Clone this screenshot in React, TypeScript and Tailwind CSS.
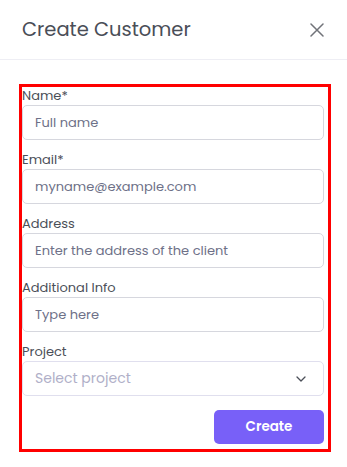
import React from 'react'

const font = { fontFamily: 'Poppins, Inter, "Noto Sans", sans-serif' }

function Field({ label, placeholder }: { label: string; placeholder: string }) {
  return (
    <div className="flex flex-col">
      <label className="text-[13px] leading-[18px] font-normal text-[#4b4f58]">{label}</label>
      <input
        placeholder={placeholder}
        className="h-[35px] w-[302px] rounded-[5px] border border-[#d6d7de] bg-white px-[12px] text-[13px] text-[#374151] outline-none placeholder:text-[#6e7188]"
      />
    </div>
  )
}

export default function App() {
  return (
    <div className="h-[467px] w-[347px] bg-white" style={font}>
      {/* Header */}
      <div className="flex h-[60px] items-center justify-between border-b border-[#eeeef4] pl-[22px] pr-[22px]">
        <h1 className="text-[19.5px] font-normal text-[#4a4e57]">Create Customer</h1>
        <button className="flex h-[16px] w-[16px] items-center justify-center text-[#717379]">
          <svg width="14" height="14" viewBox="0 0 14 14" fill="none" stroke="currentColor" strokeWidth="1.5" strokeLinecap="round">
            <path d="M1 1L13 13M13 1L1 13" />
          </svg>
        </button>
      </div>

      {/* Form */}
      <div className="ml-[19px] mt-[24px] w-[312px] border-[3px] border-[#ff0000] pb-[5px]">
        <div className="flex flex-col gap-[11px]">
          <Field label="Name*" placeholder="Full name" />
          <Field label="Email*" placeholder="myname@example.com" />
          <Field label="Address" placeholder="Enter the address of the client" />
          <Field label="Additional Info" placeholder="Type here" />
          <div className="flex flex-col">
            <label className="text-[13px] leading-[18px] font-normal text-[#4b4f58]">Project</label>
            <div className="flex h-[35px] w-[302px] items-center justify-between rounded-[5px] border border-[#e0dfee] bg-white pl-[12px] pr-[17px]">
              <span className="text-[14px] text-[#b0afc8]">Select project</span>
              <svg width="10" height="6" viewBox="0 0 10 6" fill="none" stroke="#4b4f58" strokeWidth="1.3" strokeLinecap="round" strokeLinejoin="round">
                <path d="M1 1L5 5L9 1" />
              </svg>
            </div>
          </div>
        </div>
        <div className="mt-[14px] flex w-[302px] justify-end">
          <button className="h-[34px] w-[110px] rounded-[5px] bg-[#7860f8] text-[13.5px] font-semibold text-white">
            Create
          </button>
        </div>
      </div>
    </div>
  )
}
